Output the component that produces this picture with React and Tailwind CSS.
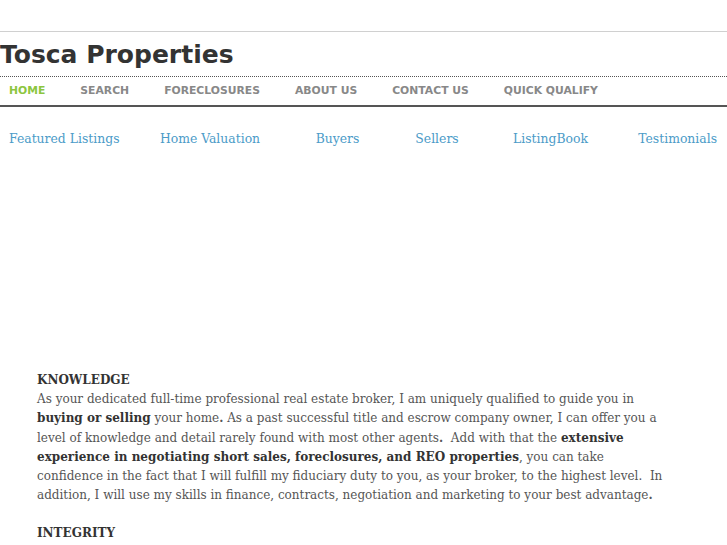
export default function App() {
  const nav = ['HOME', 'SEARCH', 'FORECLOSURES', 'ABOUT US', 'CONTACT US', 'QUICK QUALIFY'];
  const links = [
    { label: 'Featured Listings', cls: 'text-left pl-[9px]' },
    { label: 'Home Valuation', cls: 'text-center' },
    { label: 'Buyers', cls: 'text-center' },
    { label: 'Sellers', cls: 'text-center' },
    { label: 'ListingBook', cls: 'text-center' },
    { label: 'Testimonials', cls: 'text-right pr-[10px]' },
  ];
  const serif = { fontFamily: '"DejaVu Serif", serif' };

  return (
    <div className="w-[727px] h-[545px] overflow-hidden bg-white">
      <div className="h-[31px]" />
      <div className="border-t border-[#d0d0d0]">
        <h1 className="pt-[5px] h-[44px] text-[25px] leading-[36px] font-bold text-[#333] font-['DejaVu_Sans',sans-serif]">
          Tosca Properties
        </h1>
      </div>
      <div className="border-t border-dotted border-[#555]" />
      <ul className="flex h-[30px] items-center gap-[35px] pl-[9px] pt-[1px] border-b-2 border-[#555] font-['DejaVu_Sans',sans-serif] text-[10.8px] font-bold">
        {nav.map((n, i) => (
          <li key={n} className={i === 0 ? 'text-[#8cc63f]' : 'text-[#888]'}>{n}</li>
        ))}
      </ul>
      <div className="grid grid-cols-[127px_166px_89px_110px_117px_118px] pt-[23px] text-[12.4px] leading-[18px] text-[#4b9bc8]" style={serif}>
        {links.map((l) => (
          <a key={l.label} className={l.cls}>{l.label}</a>
        ))}
      </div>
      <div className="pt-[223px] pl-[37px] text-[12px] leading-[19.2px] text-[#555]" style={serif}>
        <p className="font-bold text-[#333]">KNOWLEDGE</p>
        <p>
          As your dedicated full-time professional real estate broker, I am uniquely qualified to guide you in<br />
          <b className="text-[#333]">buying or selling</b> your home<b>.</b> As a past successful title and escrow company owner, I can offer you a<br />
          level of knowledge and detail rarely found with most other agents<b>.</b>&nbsp; Add with that the <b className="text-[#333]">extensive</b><br />
          <b className="text-[#333]">experience in negotiating short sales, foreclosures, and REO properties</b>, you can take<br />
          confidence in the fact that I will fulfill my fiduciary duty to you, as your broker, to the highest level.&nbsp; In<br />
          addition, I will use my skills in finance, contracts, negotiation and marketing to your best advantage<b>.</b>
        </p>
        <p className="mt-[19px] font-bold text-[#333]">INTEGRITY</p>
      </div>
    </div>
  );
}
